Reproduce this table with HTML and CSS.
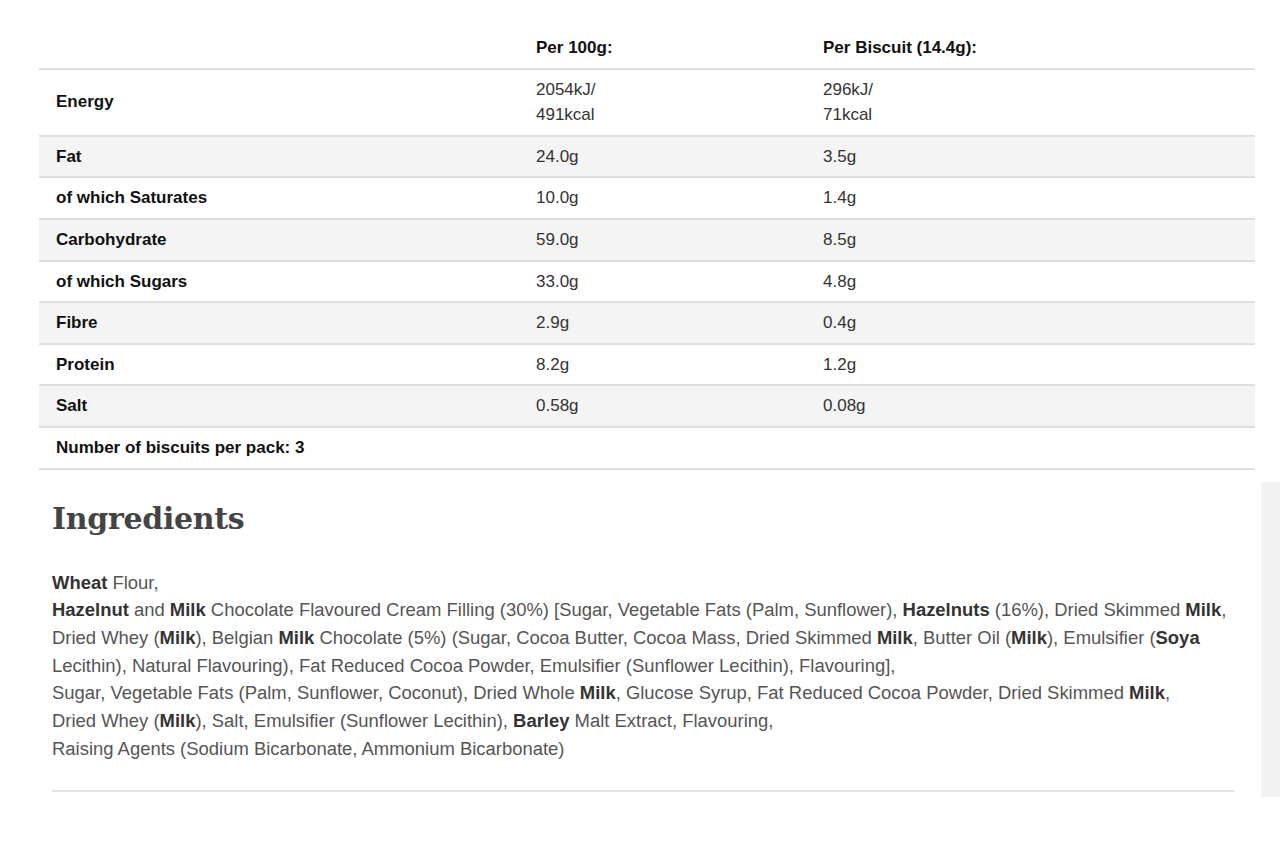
FILE: index.html
```html
<!DOCTYPE html>
<html lang="en">
<head>
<meta charset="utf-8">
<title>Nutrition</title>
<link rel="stylesheet" href="styles.css">
</head>
<body>
<table class="nutrition">
  <colgroup>
    <col class="c1"><col class="c2"><col class="c3">
  </colgroup>
  <thead>
    <tr><th></th><th>Per 100g:</th><th>Per Biscuit (14.4g):</th></tr>
  </thead>
  <tbody>
    <tr><th>Energy</th><td>2054kJ/<br>491kcal</td><td>296kJ/<br>71kcal</td></tr>
    <tr><th>Fat</th><td>24.0g</td><td>3.5g</td></tr>
    <tr><th>of which Saturates</th><td>10.0g</td><td>1.4g</td></tr>
    <tr><th>Carbohydrate</th><td>59.0g</td><td>8.5g</td></tr>
    <tr><th>of which Sugars</th><td>33.0g</td><td>4.8g</td></tr>
    <tr><th>Fibre</th><td>2.9g</td><td>0.4g</td></tr>
    <tr><th>Protein</th><td>8.2g</td><td>1.2g</td></tr>
    <tr><th>Salt</th><td>0.58g</td><td>0.08g</td></tr>
    <tr><th colspan="3">Number of biscuits per pack: 3</th></tr>
  </tbody>
</table>
<div class="lower">
  <section class="ingredients">
    <h2 class="ing-title">Ingredients</h2>
    <div class="ing-list">
      <div class="ing"><b>Wheat</b> Flour,</div>
      <div class="ing"><b>Hazelnut</b> and <b>Milk</b> Chocolate Flavoured Cream Filling (30%) [Sugar, Vegetable Fats (Palm, Sunflower), <b>Hazelnuts</b> (16%), Dried Skimmed <b>Milk</b>, Dried Whey (<b>Milk</b>), Belgian <b>Milk</b> Chocolate (5%) (Sugar, Cocoa Butter, Cocoa Mass, Dried Skimmed <b>Milk</b>, Butter Oil (<b>Milk</b>), Emulsifier (<b>Soya</b> Lecithin), Natural Flavouring), Fat Reduced Cocoa Powder, Emulsifier (Sunflower Lecithin), Flavouring],</div>
      <div class="ing">Sugar, Vegetable Fats (Palm, Sunflower, Coconut), Dried Whole <b>Milk</b>, Glucose Syrup, Fat Reduced Cocoa Powder, Dried Skimmed <b>Milk</b>,<br>Dried Whey (<b>Milk</b>), Salt, Emulsifier (Sunflower Lecithin), <b>Barley</b> Malt Extract, Flavouring,</div>
      <div class="ing">Raising Agents (Sodium Bicarbonate, Ammonium Bicarbonate)</div>
    </div>
  </section>
  <aside class="side-panel"></aside>
</div>
</body>
</html>
```
FILE: styles.css
```css
html, body {
  margin: 0;
  padding: 0;
  background: #ffffff;
}
body {
  font-family: "Liberation Sans", Arial, sans-serif;
  color: #222;
}
.nutrition {
  margin: 28px 0 0 39px;
  width: 1216px;
  border-collapse: collapse;
  table-layout: fixed;
  font-size: 17px;
  line-height: 25.6px;
}
.nutrition .c1 { width: 480px; }
.nutrition .c2 { width: 287px; }
.nutrition .c3 { width: 449px; }
.nutrition th,
.nutrition td {
  text-align: left;
  vertical-align: middle;
  padding: 7px 17px;
  border-bottom: 2px solid #dedede;
}
.nutrition th { font-weight: bold; color: #111; }
.nutrition td { font-weight: normal; color: #333; }
.nutrition tbody tr:nth-child(even) { background: #f4f4f4; }

.lower {
  display: flex;
  align-items: flex-start;
}
.ingredients {
  margin-left: 52px;
  width: 1182px;
  padding-bottom: 28px;
  border-bottom: 2px solid #e2e2e2;
}
.ing-title {
  font-family: "DejaVu Serif", "Liberation Serif", serif;
  font-weight: bold;
  font-size: 30px;
  line-height: 36px;
  color: #444;
  margin: 31px 0 32px;
  letter-spacing: -0.3px;
}
.ing-list {
  font-size: 18.44px;
  line-height: 27.67px;
  color: #555;
}
.ing b { color: #333; font-weight: bold; }
.side-panel {
  margin-left: auto;
  margin-top: 12px;
  width: 19px;
  height: 315px;
  background: #f2f2f2;
}
```
